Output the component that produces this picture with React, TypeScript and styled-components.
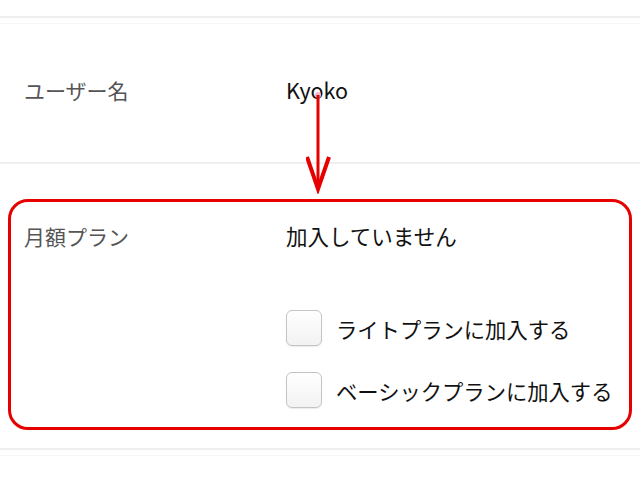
import React from "react";
import styled, { createGlobalStyle } from "styled-components";

const GlobalStyle = createGlobalStyle`
  html, body {
    margin: 0;
    padding: 0;
    background: #fff;
  }
  body {
    font-family: "Noto Sans CJK JP", "Noto Sans", sans-serif;
  }
`

const Page = styled.div`
  position: relative;
  width: 640px;
  height: 480px;
  overflow: hidden;
  padding-top: 16px;
  box-sizing: border-box;
`

const Divider = styled.div`
  height: 5px;
  border-top: 2px solid #eeeeee;
  border-bottom: 1px solid #f6f6f6;
`

const SingleRule = styled.div`
  height: 0;
  border-top: 2px solid #efefef;
`

const Row = styled.div`
  display: grid;
  grid-template-columns: 262px 1fr;
  align-items: center;
  height: 138px;
  box-sizing: border-box;
  padding: 0 0 6px 24px;
`

const Label = styled.div`
  font-size: 21px;
  line-height: 30px;
  color: #555;
`

const Value = styled.div`
  font-size: 21.5px;
  line-height: 30px;
  color: #111;
`

const Highlight = styled.div`
  margin: 35px 8px 0;
  border: 3px solid #e60000;
  border-radius: 20px;
  padding: 19px 0 19px 13px;
  display: grid;
  grid-template-columns: 262px 1fr;
  align-items: start;
`

const Options = styled.div`
  display: flex;
  flex-direction: column;
`

const Choices = styled.div`
  display: flex;
  flex-direction: column;
  gap: 26px;
  margin-top: 59px;
`

const Choice = styled.label`
  display: flex;
  align-items: center;
  gap: 14px;
  font-size: 21.3px;
  color: #111;
  white-space: nowrap;
`

const Box = styled.span`
  display: inline-block;
  width: 34px;
  height: 34px;
  border: 1px solid #c4c4c4;
  border-radius: 6px;
  background: linear-gradient(#ffffff, #f2f2f2);
  box-shadow: 0 1px 1px rgba(0, 0, 0, 0.08);
`

const Footer = styled.div`
  margin-top: 18px;
`

const Arrow = styled.svg`
  position: absolute;
  left: 306px;
  top: 88px;
`

export default function App() {
  return (
    <>
      <GlobalStyle />
      <Page>
        <Divider />
        <Row>
          <Label>ユーザー名</Label>
          <Value>Kyoko</Value>
        </Row>
        <SingleRule />
        <Highlight>
          <Label>月額プラン</Label>
          <Options>
            <Value>加入していません</Value>
            <Choices>
              <Choice>
                <Box />
                ライトプランに加入する
              </Choice>
              <Choice>
                <Box />
                ベーシックプランに加入する
              </Choice>
            </Choices>
          </Options>
        </Highlight>
        <Footer>
          <Divider />
        </Footer>
        <Arrow width="26" height="106" viewBox="0 0 26 106">
          <circle cx="12" cy="7" r="3" fill="#f4b6c8" />
          <line x1="12" y1="7" x2="12" y2="100" stroke="#e60000" strokeWidth="3" />
          <polyline
            points="1,69 12,101 23,69"
            fill="none"
            stroke="#e60000"
            strokeWidth="4"
            strokeLinejoin="miter"
          />
        </Arrow>
      </Page>
    </>
  )
}
